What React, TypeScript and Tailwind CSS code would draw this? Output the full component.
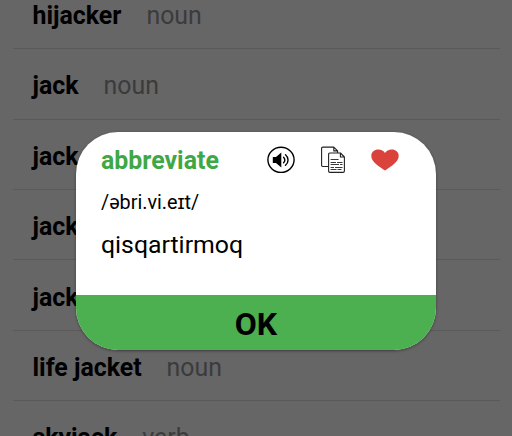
type Entry = { word: string; kind: string };

const entries: Entry[] = [
  { word: "hijacker", kind: "noun" },
  { word: "jack", kind: "noun" },
  { word: "jack", kind: "" },
  { word: "jack", kind: "" },
  { word: "jack", kind: "" },
  { word: "life jacket", kind: "noun" },
  { word: "skyjack", kind: "verb" },
];

function SpeakerIcon() {
  return (
    <svg className="h-7 w-7" viewBox="0 0 28 28" fill="none" stroke="#000">
      <ellipse cx="14" cy="13.8" rx="13.1" ry="12.6" strokeWidth="1.4" />
      <path d="M5.8 10.9h3.2l5.3-4.3v14.8L9 17.1H5.8z" fill="#000" stroke="none" />
      <path d="M16.6 11.2c1.4 1.6 1.4 4 0 5.6M18.5 8.8c3.4 2.8 3.4 7.6 0 10.4" strokeWidth="1.4" strokeLinecap="round" />
    </svg>
  );
}

function CopyIcon() {
  return (
    <svg className="h-7 w-6" viewBox="0 0 24 28" fill="none" stroke="#222" strokeWidth="1.1" strokeLinejoin="round">
      <path d="M7 20.5H1.8Q.6 20.5.6 19.3V2.3Q.6 1.1 1.8 1.1h11l3.8 3.8V7M12.8 1.1v3.8h3.8" />
      <path d="M8.8 7h10.7l3.9 4v14.1q0 1.3-1.3 1.3H8.8q-1.2 0-1.2-1.3V8.3Q7.6 7 8.8 7zM19.4 7v4h4" />
      <path d="M9.6 13.5h8M9.6 16.5h5.4m1 0h5.5M9.6 18.5h8.4m1 0h2.5M9.6 21.5h3.4m1 0h7.5M9.6 23.5h5.9m1 0h4" strokeWidth="0.9" />
    </svg>
  );
}

function HeartIcon() {
  return (
    <svg className="mb-px h-[22px] w-7" viewBox="0 0 28 22" fill="#d9433b">
      <path d="M14 21.6C10.4 18.3.3 13.8.3 6.9.3 3 3.4.4 7.3.4c3 0 5.4 1.3 6.7 3.5C15.3 1.7 17.7.4 20.7.4c3.9 0 7 2.6 7 6.5 0 6.9-10.1 11.4-13.7 14.7z" />
    </svg>
  );
}

export default function App() {
  return (
    <main className="relative h-[436px] w-[512px] overflow-hidden bg-[#666667] font-['Roboto',sans-serif]">
      <ul className="-mt-[21.2px] pr-3 pl-[12.5px]">
        {entries.map((entry, i) => (
          <li
            key={i}
            className="flex h-[70.4px] items-center gap-[25px] border-b border-[#5a5a5b] pt-[5px] pl-[20px] text-[24.9px] leading-[30px] whitespace-nowrap"
          >
            <span className="font-bold text-black">{entry.word}</span>
            <span className="text-[#3b3b3c]">{entry.kind}</span>
          </li>
        ))}
      </ul>

      <section
        role="dialog"
        className="absolute top-[132px] left-[76px] flex h-[218px] w-[360px] flex-col overflow-hidden rounded-[42px] bg-white shadow-[0_1px_3px_rgba(0,0,0,0.4)]"
      >
        <div className="flex-1 pr-[37px] pl-[25px] text-black">
          <header className="mt-[13px] flex h-[30px] items-center">
            <h1 className="flex-1 pt-px text-[24.9px] leading-[30px] font-bold text-[#3fa845]">abbreviate</h1>
            <div className="flex items-center gap-[26px]">
              <SpeakerIcon />
              <CopyIcon />
              <HeartIcon />
            </div>
          </header>
          <p className="mt-4 text-[19.8px] leading-6">/əbri.vi.eɪt/</p>
          <p className="mt-[15px] text-[24.8px] leading-[30px]">qisqartirmoq</p>
        </div>
        <button className="flex h-[55px] items-center justify-center bg-[#4caf50] pt-[3px] text-[32px] font-bold text-black">
          OK
        </button>
      </section>
    </main>
  );
}
